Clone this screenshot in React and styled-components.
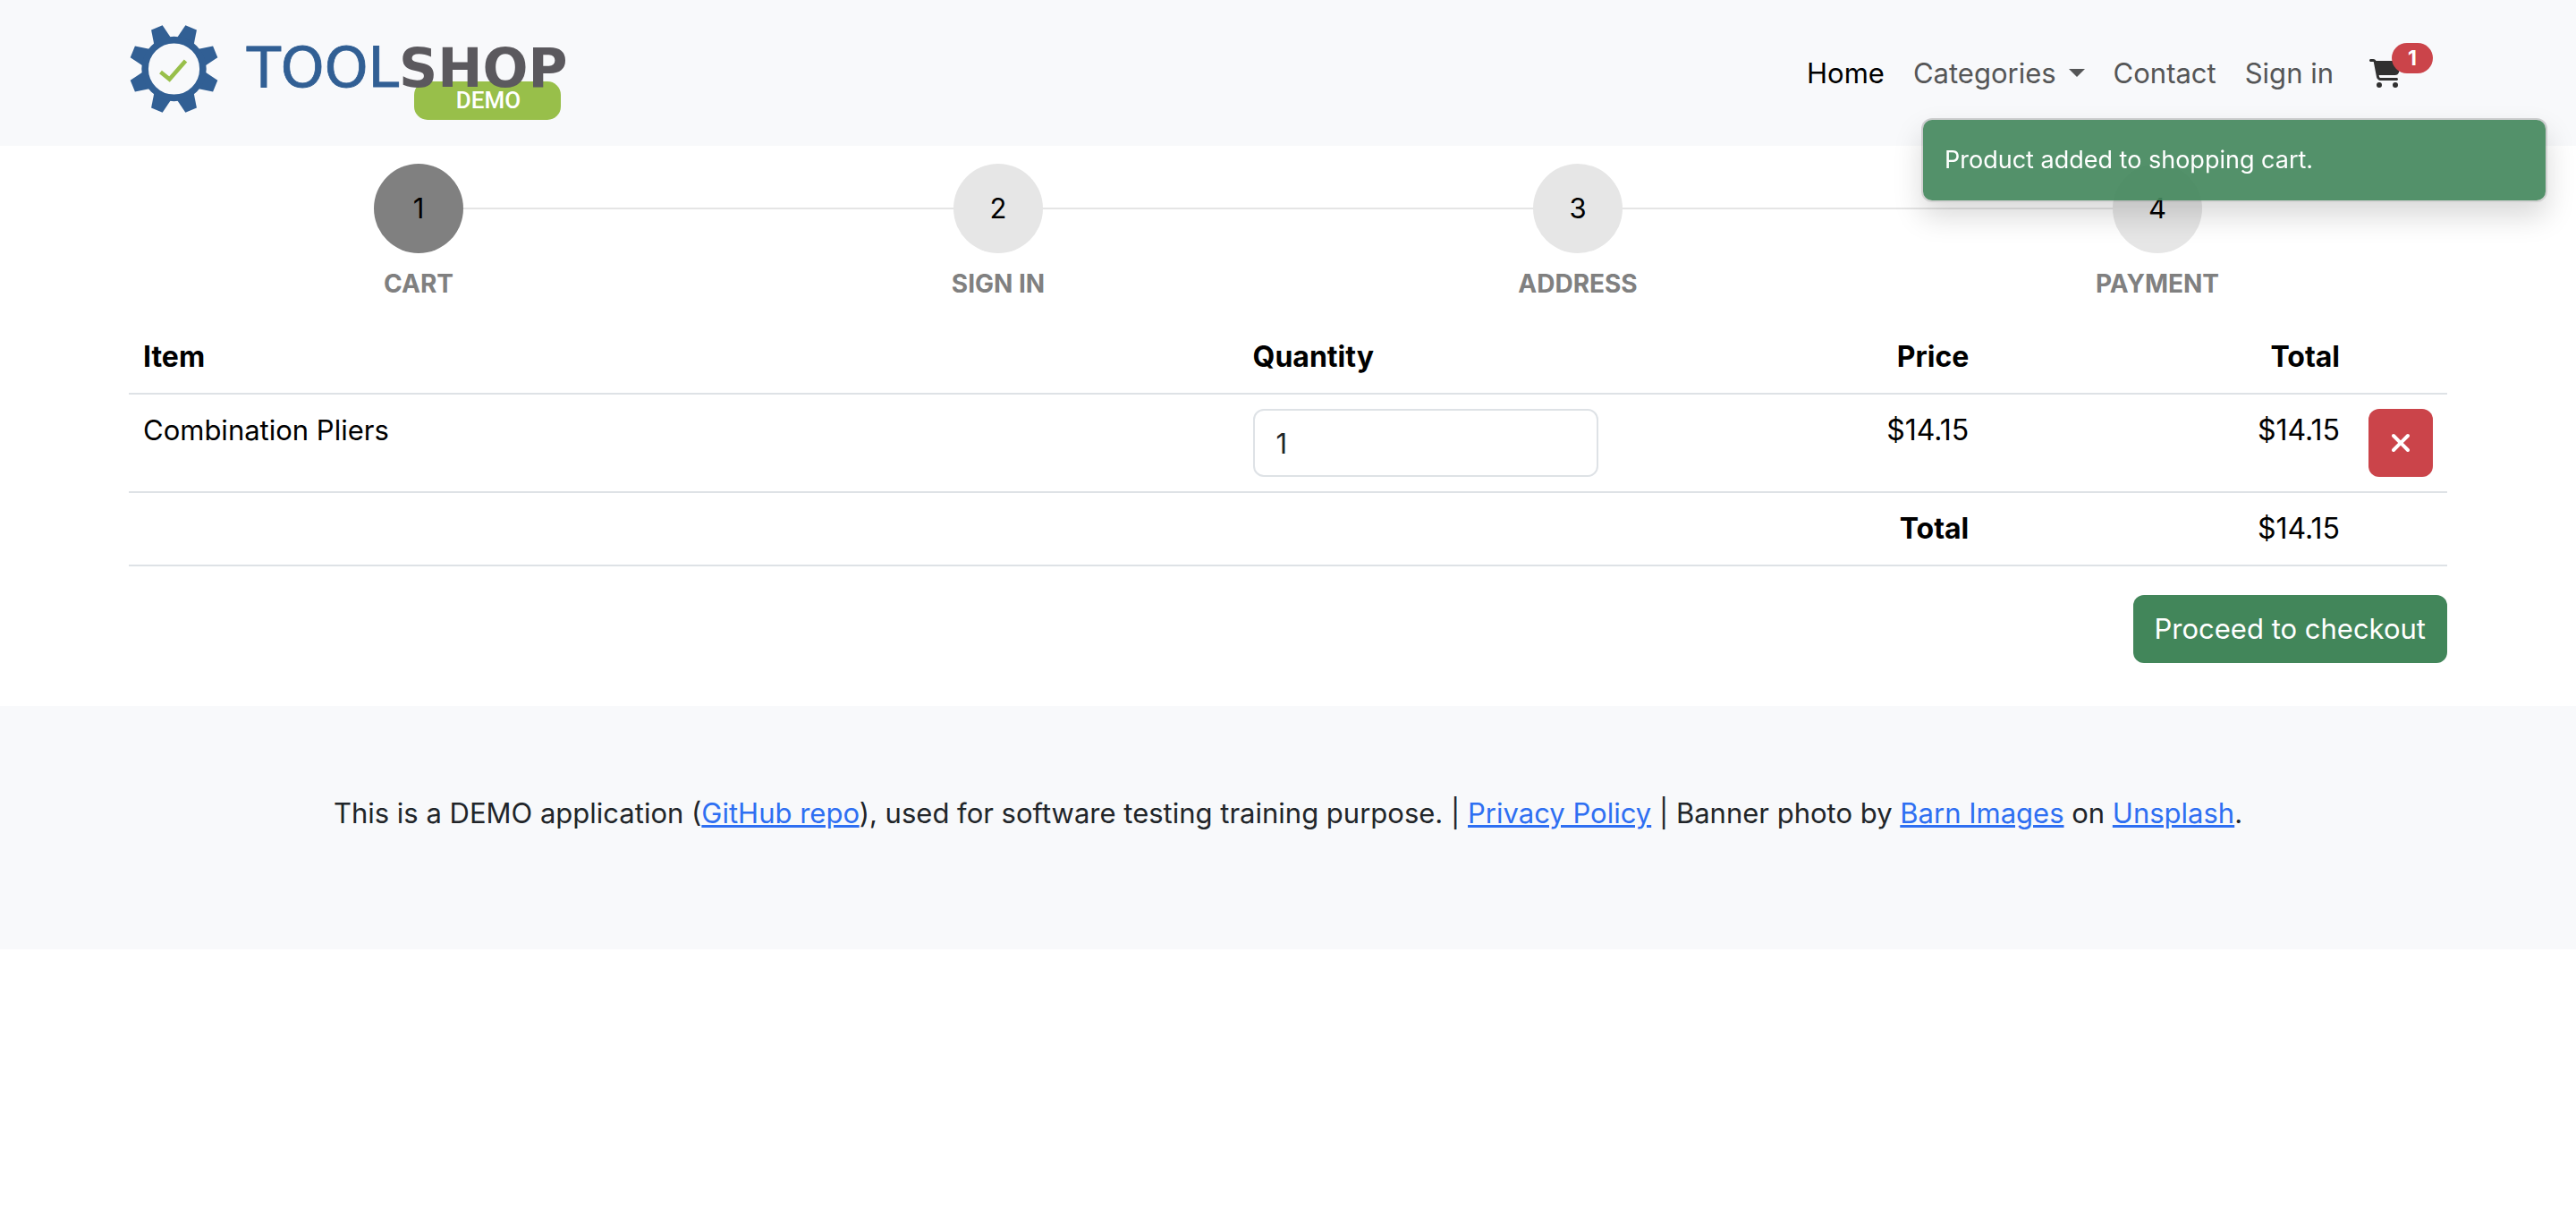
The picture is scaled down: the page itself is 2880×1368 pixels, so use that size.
import React, { useState } from "react";
import styled, { createGlobalStyle, css } from "styled-components";
import { FaCartShopping, FaXmark } from "react-icons/fa6";

const GlobalStyle = createGlobalStyle`
  *, *::before, *::after { box-sizing: border-box; }
  body {
    margin: 0;
    background: #fff;
    color: #212529;
    font-family: Inter, "Liberation Sans", sans-serif;
    font-size: 31px;
    line-height: 48px;
  }
`;

const Container = styled.div`
  width: 90%;
  margin: 0 auto;
`;

const Header = styled.header`
  background: #f8f9fb;
`;

const Navbar = styled(Container).attrs({ as: "nav" })`
  display: flex;
  align-items: center;
  justify-content: space-between;
  padding: 16px 0;
`;

const Brand = styled.a`
  display: block;
`;

const LogoSvg = styled.svg`
  display: block;
  width: 492px;
  height: 131px;
`;

const NavList = styled.ul`
  display: flex;
  align-items: center;
  margin: 0;
  padding: 0;
  list-style: none;
`;

const NavLink = styled.a`
  display: flex;
  align-items: center;
  gap: 14px;
  padding: 16px;
  color: ${(p) => (p.$active ? "#000" : "#555657")};
  text-decoration: none;
`;

const Caret = styled.span`
  border: 9px solid transparent;
  border-top-color: currentColor;
  border-bottom: 0;
`;

const CartLink = styled.a`
  display: flex;
  align-items: flex-start;
  margin-left: 8px;
  padding: 16px;
  color: #303030;
  text-decoration: none;
`;

const CartIcon = styled(FaCartShopping)`
  width: 36px;
  height: 32px;
`;

const Badge = styled.span`
  min-width: 46px;
  margin: -18px 0 0 -11px;
  border-radius: 17px;
  background: #cb444a;
  color: #fff;
  font-size: 23px;
  line-height: 34px;
  font-weight: 700;
  text-align: center;
`;

const Toast = styled.div`
  position: fixed;
  top: 132px;
  right: 32px;
  width: 700px;
  padding: 24px;
  border: 2px solid rgba(0, 0, 0, 0.175);
  border-radius: 12px;
  background: rgba(68, 136, 93, 0.92);
  background-clip: padding-box;
  box-shadow: 0 16px 32px rgba(0, 0, 0, 0.15);
  color: #fff;
  font-size: 27px;
  line-height: 42px;
  z-index: 2;
`;

const Steps = styled.ol`
  display: grid;
  grid-template-columns: repeat(4, 1fr);
  margin: 0;
  padding: 20px 0 18px;
  list-style: none;
`;

const Step = styled.li`
  display: flex;
  flex-direction: column;
  align-items: center;
  gap: 10px;
`;

const Track = styled.div`
  display: flex;
  align-items: center;
  align-self: stretch;
`;

const Line = styled.span`
  flex: 1;
  height: 2px;
  background: ${(p) => (p.$hidden ? "transparent" : "#e5e5e5")};
`;

const Circle = styled.span`
  display: grid;
  place-items: center;
  width: 100px;
  height: 100px;
  border-radius: 50%;
  background: ${(p) => (p.$current ? "#808080" : "#e6e6e6")};
  color: #000;
`;

const StepLabel = styled.span`
  color: #808080;
  font-size: 28px;
  font-weight: 700;
  text-transform: uppercase;
`;

const Table = styled.table`
  width: 100%;
  table-layout: fixed;
  border-collapse: separate;
  border-spacing: 0;
  color: #000;
`;

const Col = styled.col`
  width: ${(p) => p.$width};
`;

const cell = css`
  padding: 16px;
  border-bottom: 2px solid #dee2e6;
  text-align: ${(p) => (p.$end ? "right" : "left")};
  vertical-align: top;
`;

const Th = styled.th`
  ${cell}
  font-size: 32px;
  font-weight: 700;
`;

const Td = styled.td`
  ${cell}
  font-size: ${(p) => (p.$end ? "32px" : "31px")};
`;

const QuantityInput = styled.input`
  display: block;
  width: 100%;
  height: 76px;
  padding: 12px 24px;
  border: 2px solid #dee2e6;
  border-radius: 12px;
  background: #fff;
  color: #212529;
  font: inherit;
  appearance: textfield;
  &::-webkit-inner-spin-button { appearance: none; margin: 0; }
`;

const Button = styled.button`
  display: flex;
  align-items: center;
  justify-content: center;
  height: 76px;
  padding: 0 24px;
  border: 0;
  border-radius: 12px;
  background: ${(p) => (p.$danger ? "#cb444a" : "#42865a")};
  color: #fff;
  font: inherit;
  cursor: pointer;
`;

const RemoveButton = styled(Button)`
  width: 100%;
  padding: 0;
`;

const Actions = styled.div`
  display: flex;
  justify-content: flex-end;
  padding: 32px 0 48px;
`;

const Footer = styled.footer`
  padding: 96px 24px 128px;
  background: #f8f9fb;
  text-align: center;
`;

const FooterText = styled.p`
  margin: 0;
`;

const TextLink = styled.a`
  color: #2e6ff2;
  text-decoration: underline;
`;

const teeth = [0, 45, 90, 135, 180, 225, 270, 315];

function Logo() {
  return (
    <LogoSvg viewBox="0 0 492 131" role="img" aria-label="Toolshop demo">
      <g transform="translate(50.5 61)">
        {teeth.map((angle) => (
          <path
            key={angle}
            transform={`rotate(${angle + 22.5})`}
            d="M-10 -34 L-6.8 -50 H6.8 L10 -34 Z"
            fill="#315f94"
          />
        ))}
        <circle r="32.4" fill="none" stroke="#315f94" strokeWidth="7.6" />
        <path d="M-15 3.5 L-5 11.5 L13 -9" fill="none" stroke="#98bf4a" strokeWidth="4.6" />
      </g>
      <rect x="319" y="75" width="164" height="43" rx="15" fill="#98bf4a" />
      <text x="302" y="81" textAnchor="end" fontFamily="DejaVu Sans" fontSize="62" fill="#315f94" stroke="#315f94" strokeWidth="0.8">TOOL</text>
      <text x="302" y="81" fontFamily="DejaVu Sans" fontWeight="700" fontSize="60" fill="#5b595e">SHOP</text>
      <text x="402" y="105" textAnchor="middle" fontFamily="Roboto" fontWeight="500" fontSize="26" fill="#fff">DEMO</text>
    </LogoSvg>
  );
}

const steps = ["Cart", "Sign in", "Address", "Payment"];

export default function App() {
  const [quantity, setQuantity] = useState(1);
  return (
    <>
      <GlobalStyle />
      <Header>
        <Navbar>
          <Brand href="#"><Logo /></Brand>
          <NavList>
            <li><NavLink href="#" $active>Home</NavLink></li>
            <li><NavLink href="#">Categories <Caret /></NavLink></li>
            <li><NavLink href="#">Contact</NavLink></li>
            <li><NavLink href="#">Sign in</NavLink></li>
            <li>
              <CartLink href="#" aria-label="Cart">
                <CartIcon />
                <Badge>1</Badge>
              </CartLink>
            </li>
          </NavList>
        </Navbar>
      </Header>
      <Toast role="alert">Product added to shopping cart.</Toast>
      <Container as="main">
        <Steps>
          {steps.map((name, i) => (
            <Step key={name}>
              <Track>
                <Line $hidden={i === 0} />
                <Circle $current={i === 0}>{i + 1}</Circle>
                <Line $hidden={i === steps.length - 1} />
              </Track>
              <StepLabel>{name}</StepLabel>
            </Step>
          ))}
        </Steps>
        <Table>
          <colgroup>
            <Col />
            <Col $width="418px" />
            <Col $width="16%" />
            <Col $width="16%" />
            <Col $width="104px" />
          </colgroup>
          <thead>
            <tr>
              <Th>Item</Th>
              <Th>Quantity</Th>
              <Th $end>Price</Th>
              <Th $end>Total</Th>
              <Th />
            </tr>
          </thead>
          <tbody>
            <tr>
              <Td>Combination Pliers</Td>
              <Td>
                <QuantityInput
                  type="number"
                  min="1"
                  aria-label="Quantity for Combination Pliers"
                  value={quantity}
                  onChange={(e) => setQuantity(e.target.value)}
                />
              </Td>
              <Td $end>$14.15</Td>
              <Td $end>$14.15</Td>
              <Td>
                <RemoveButton type="button" $danger aria-label="Remove">
                  <FaXmark size={32} />
                </RemoveButton>
              </Td>
            </tr>
          </tbody>
          <tfoot>
            <tr>
              <Td />
              <Td />
              <Th $end>Total</Th>
              <Td $end>$14.15</Td>
              <Td />
            </tr>
          </tfoot>
        </Table>
        <Actions>
          <Button type="button">Proceed to checkout</Button>
        </Actions>
      </Container>
      <Footer>
        <FooterText>
          This is a DEMO application (<TextLink href="#">GitHub repo</TextLink>), used for software testing training
          purpose. | <TextLink href="#">Privacy Policy</TextLink> | Banner photo by{" "}
          <TextLink href="#">Barn Images</TextLink> on <TextLink href="#">Unsplash</TextLink>.
        </FooterText>
      </Footer>
    </>
  );
}
